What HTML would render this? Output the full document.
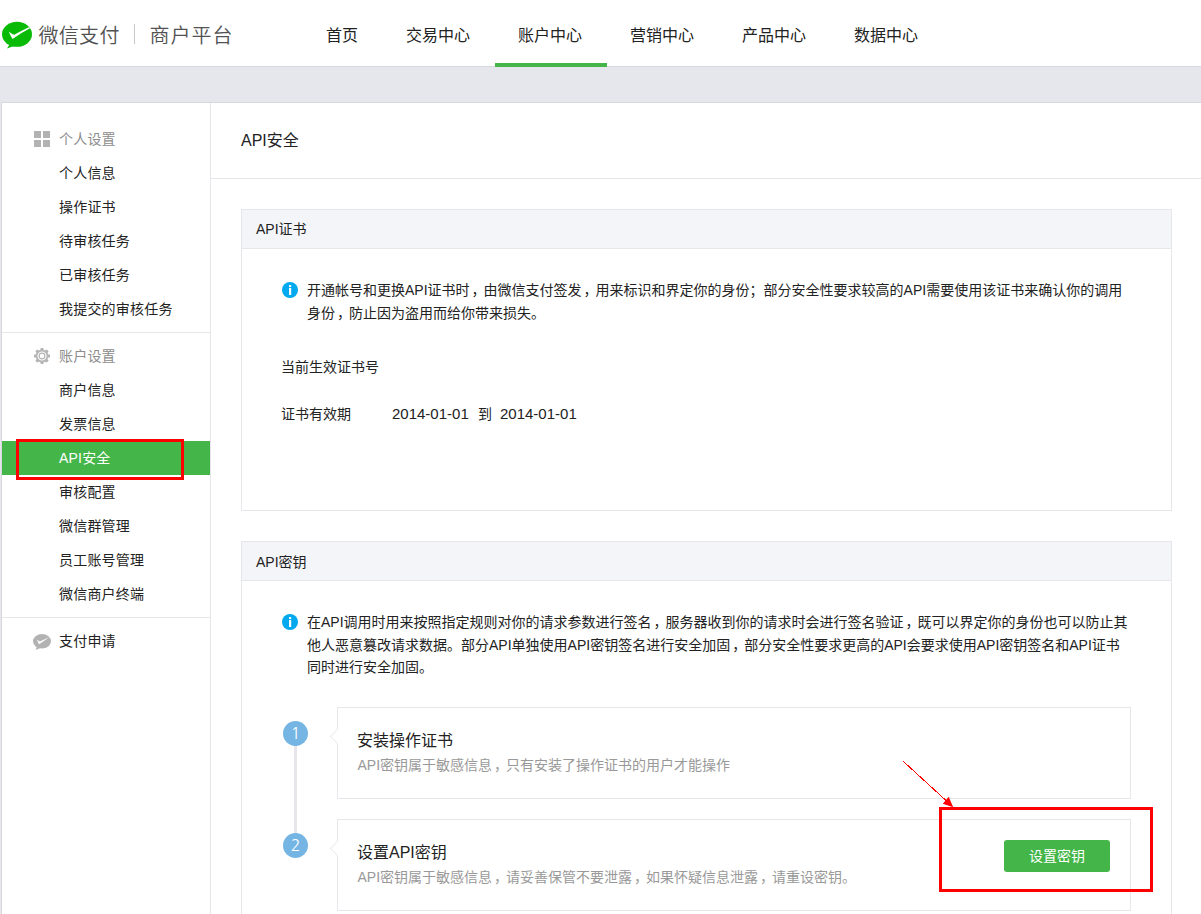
<!DOCTYPE html>
<html lang="zh-CN">
<head>
<meta charset="utf-8">
<title>API安全 - 微信支付商户平台</title>
<style>
*{box-sizing:border-box;margin:0;padding:0}
html,body{width:1201px;height:914px;overflow:hidden}
body{background:#e6e7ec;font-family:"Liberation Sans","Noto Sans CJK SC",sans-serif;font-size:14px;color:#222;position:relative}
.hd{position:absolute;left:0;top:0;width:1201px;height:67px;background:#fff;border-bottom:1px solid #d6d8dd}
.logo-ic{position:absolute;left:1px;top:20px}
.logo-t1{position:absolute;left:38.5px;top:21.5px;font-size:20px;line-height:28px;color:#525252;font-weight:350;letter-spacing:0.3px;white-space:nowrap}
.logo-sep{position:absolute;left:134px;top:24px;width:1px;height:20px;background:#c8c8c8}
.logo-t2{position:absolute;left:149.5px;top:21.5px;font-size:20px;line-height:28px;color:#525252;font-weight:350;letter-spacing:1px;white-space:nowrap}
.nav{position:absolute;left:303px;top:0;height:67px;display:flex}
.nav a{display:block;height:67px;line-height:72px;padding:0 25px 0 23px;font-size:16px;color:#222;text-decoration:none;white-space:nowrap;position:relative}
.nav a.on:after{content:"";position:absolute;left:0;right:0;bottom:0;height:4px;background:#44b549}
.wrap{position:absolute;left:1px;top:102px;width:1210px;height:830px;background:#fff;border:1px solid #d6d8dd}
.side{position:absolute;left:0;top:0;width:209px;height:830px;border-right:1px solid #e7e7eb}
.side .g{position:absolute;left:0;width:208px;height:34px;line-height:34px;padding-left:57px;color:#8d8d8d;font-size:14px;letter-spacing:.2px}
.side .i{position:absolute;left:0;width:208px;height:34px;line-height:34px;padding-left:57px;color:#222;font-size:14px;white-space:nowrap;letter-spacing:.2px}
.side .i.on{background:#44b549;color:#fff}
.side .hr{position:absolute;left:0;width:208px;height:1px;background:#e7e7eb}
.side svg{position:absolute}
.main{position:absolute;left:209px;top:0;width:991px}
.ttl{position:absolute;left:30px;top:23px;font-size:16px;line-height:30px;color:#222}
.ttl-hr{position:absolute;left:0;top:75px;width:991px;height:1px;background:#e7e7eb}
.card{position:absolute;left:30px;width:931px;border:1px solid #e7e7eb;background:#fff}
.card .ch{height:39px;line-height:38px;padding-left:14px;background:#f4f5f9;border-bottom:1px solid #e7e7eb;font-size:14px;color:#222}
.tip{position:absolute;left:65px;white-space:nowrap;font-size:14px;line-height:22.5px;color:#222;width:830px}
.tip-ic{position:absolute;left:40px}
.lbl{position:absolute;font-size:14px;line-height:20px;color:#222;white-space:nowrap}
.dt{font-size:15px}
.cm{position:relative;left:2px}
.step-n{position:absolute;left:41px;width:25px;height:25px;border-radius:13px;background:#74b5e4;color:#fff;text-align:center;line-height:24px;font-size:16px;font-family:"NanumGothic","Liberation Sans",sans-serif}
.step-l{position:absolute;left:52px;width:3px;background:#e7e7eb}
.sbox{position:absolute;left:95px;width:794px;height:92px;border:1px solid #e7e7eb;background:#fff}
.sbox:before{content:"";position:absolute;left:-6px;top:22.5px;width:10px;height:10px;background:#fff;border-left:1px solid #ececf0;border-bottom:1px solid #ececf0;transform:rotate(45deg)}
.sbox h4{position:absolute;left:19px;top:21px;font-size:16px;line-height:24px;font-weight:400;color:#222;white-space:nowrap}
.sbox p{position:absolute;left:19.5px;top:46px;font-size:14px;line-height:22px;color:#999;white-space:nowrap}
.btn{position:absolute;left:666px;top:20px;width:106px;height:32px;border-radius:3px;background:#44b549;color:#fff;text-align:center;line-height:32px;font-size:14px}
.red1{position:absolute;left:16px;top:439px;width:168px;height:41px;border:3px solid #fe0000}
.red2{position:absolute;left:939px;top:807px;width:214px;height:85px;border:3px solid #fe0000}
.arrow{position:absolute;left:895px;top:755px}
</style>
</head>
<body>
<div class="hd">
  <svg class="logo-ic" width="34" height="32" viewBox="0 0 34 32">
    <ellipse cx="16" cy="14.3" rx="15" ry="12.5" fill="#09bb07"/>
    <path d="M8.5 24.5 L6 28.6 L13 26 Z" fill="#09bb07"/>
    <path d="M7.8 11.4 Q10.5 13.8 13.2 14.7 Q20 11 28.3 7 L29 8.3 Q20 13 11.5 18.9 Q9.3 15.5 7.8 11.4 Z" fill="#fff"/>
  </svg>
  <div class="logo-t1">微信支付</div>
  <div class="logo-sep"></div>
  <div class="logo-t2">商户平台</div>
  <div class="nav">
    <a>首页</a><a>交易中心</a><a class="on">账户中心</a><a>营销中心</a><a>产品中心</a><a>数据中心</a>
  </div>
</div>
<div class="wrap">
  <div class="side">
    <svg style="left:32px;top:28px" width="16" height="16" viewBox="0 0 16 16"><rect x="0" y="0" width="7" height="7" fill="#b2b2b2"/><rect x="9" y="0" width="7" height="7" fill="#b2b2b2"/><rect x="0" y="9" width="7" height="7" fill="#b2b2b2"/><rect x="9" y="9" width="7" height="7" fill="#b2b2b2"/></svg>
    <div class="g" style="top:19px">个人设置</div>
    <div class="i" style="top:53px">个人信息</div>
    <div class="i" style="top:87px">操作证书</div>
    <div class="i" style="top:121px">待审核任务</div>
    <div class="i" style="top:155px">已审核任务</div>
    <div class="i" style="top:189px">我提交的审核任务</div>
    <div class="hr" style="top:229px"></div>
    <svg style="left:31px;top:244px" width="18" height="18" viewBox="-9 -9 18 18"><g fill="#b4b4b4"><rect x="-1.6" y="-8" width="3.2" height="3" rx="0.7" transform="rotate(0)"/><rect x="-1.6" y="-8" width="3.2" height="3" rx="0.7" transform="rotate(45)"/><rect x="-1.6" y="-8" width="3.2" height="3" rx="0.7" transform="rotate(90)"/><rect x="-1.6" y="-8" width="3.2" height="3" rx="0.7" transform="rotate(135)"/><rect x="-1.6" y="-8" width="3.2" height="3" rx="0.7" transform="rotate(180)"/><rect x="-1.6" y="-8" width="3.2" height="3" rx="0.7" transform="rotate(225)"/><rect x="-1.6" y="-8" width="3.2" height="3" rx="0.7" transform="rotate(270)"/><rect x="-1.6" y="-8" width="3.2" height="3" rx="0.7" transform="rotate(315)"/></g><circle r="5.45" fill="none" stroke="#b4b4b4" stroke-width="1.7"/><circle r="2.85" fill="none" stroke="#b4b4b4" stroke-width="1.15"/></svg>
    <div class="g" style="top:236px">账户设置</div>
    <div class="i" style="top:270px">商户信息</div>
    <div class="i" style="top:304px">发票信息</div>
    <div class="i on" style="top:338px">API安全</div>
    <div class="i" style="top:372px">审核配置</div>
    <div class="i" style="top:406px">微信群管理</div>
    <div class="i" style="top:440px">员工账号管理</div>
    <div class="i" style="top:474px">微信商户终端</div>
    <div class="hr" style="top:514px"></div>
    <svg style="left:30px;top:530px" width="20" height="18" viewBox="0 0 20 18"><ellipse cx="10" cy="8.3" rx="9" ry="7.2" fill="#b2b2b2"/><path d="M5 13.5 L3.5 17 L8.5 15 Z" fill="#b2b2b2"/><path d="M4.9 6.6 Q6.6 8 8 8.4 Q12 6.4 17.2 4.2 Q12 7.8 7.1 11.2 Q5.8 9 4.9 6.6 Z" fill="#fff"/></svg>
    <div class="i" style="top:521px">支付申请</div>
  </div>
  <div class="main">
    <div class="ttl">API安全</div>
    <div class="ttl-hr"></div>
    <div class="card" style="top:106px;height:302px">
      <div class="ch">API证书</div>
      <svg class="tip-ic" style="top:72px" width="16" height="16" viewBox="0 0 16 16"><circle cx="8" cy="8" r="8" fill="#02a9ee"/><rect x="7" y="6" width="2.2" height="7" fill="#fff"/><rect x="7" y="3.1" width="2.2" height="2" fill="#fff"/></svg>
      <div class="tip" style="top:69px">开通帐号和更换API证书时<span class="cm">，</span>由微信支付签发<span class="cm">，</span>用来标识和界定你的身份；部分安全性要求较高的API需要使用该证书来确认你的调用<br>身份<span class="cm">，</span>防止因为盗用而给你带来损失。</div>
      <div class="lbl" style="left:39px;top:147px">当前生效证书号</div>
      <div class="lbl" style="left:39px;top:194px">证书有效期</div>
      <div class="lbl dt" style="left:150px;top:194px">2014-01-01</div><div class="lbl" style="left:236px;top:194px">到</div><div class="lbl dt" style="left:258px;top:194px">2014-01-01</div>
    </div>
    <div class="card" style="top:438px;height:400px;border-bottom:0">
      <div class="ch" style="line-height:40px">API密钥</div>
      <svg class="tip-ic" style="top:72px" width="16" height="16" viewBox="0 0 16 16"><circle cx="8" cy="8" r="8" fill="#02a9ee"/><rect x="7" y="6" width="2.2" height="7" fill="#fff"/><rect x="7" y="3.1" width="2.2" height="2" fill="#fff"/></svg>
      <div class="tip" style="top:69px">在API调用时用来按照指定规则对你的请求参数进行签名<span class="cm">，</span>服务器收到你的请求时会进行签名验证<span class="cm">，</span>既可以界定你的身份也可以防止其<br>他人恶意篡改请求数据。部分API单独使用API密钥签名进行安全加固<span class="cm">，</span>部分安全性要求更高的API会要求使用API密钥签名和API证书<br>同时进行安全加固。</div>
      <div class="step-l" style="top:192px;height:112px"></div>
      <div class="step-n" style="top:179px">1</div>
      <div class="step-n" style="top:291px">2</div>
      <div class="sbox" style="top:165px"><h4>安装操作证书</h4><p>API密钥属于敏感信息<span class="cm">，</span>只有安装了操作证书的用户才能操作</p></div>
      <div class="sbox" style="top:277px"><h4>设置API密钥</h4><p>API密钥属于敏感信息<span class="cm">，</span>请妥善保管不要泄露<span class="cm">，</span>如果怀疑信息泄露<span class="cm">，</span>请重设密钥。</p><div class="btn">设置密钥</div></div>
    </div>
  </div>
</div>
<div class="red1"></div>
<div class="red2"></div>
<svg class="arrow" width="70" height="60" viewBox="0 0 70 60"><line x1="8.5" y1="6.5" x2="51" y2="45.5" stroke="#fe0000" stroke-width="1" shape-rendering="crispEdges"/><path d="M58.2 52.2 L47.8 48.8 L53.7 41.8 Z" fill="#fe0000"/></svg>
</body>
</html>
